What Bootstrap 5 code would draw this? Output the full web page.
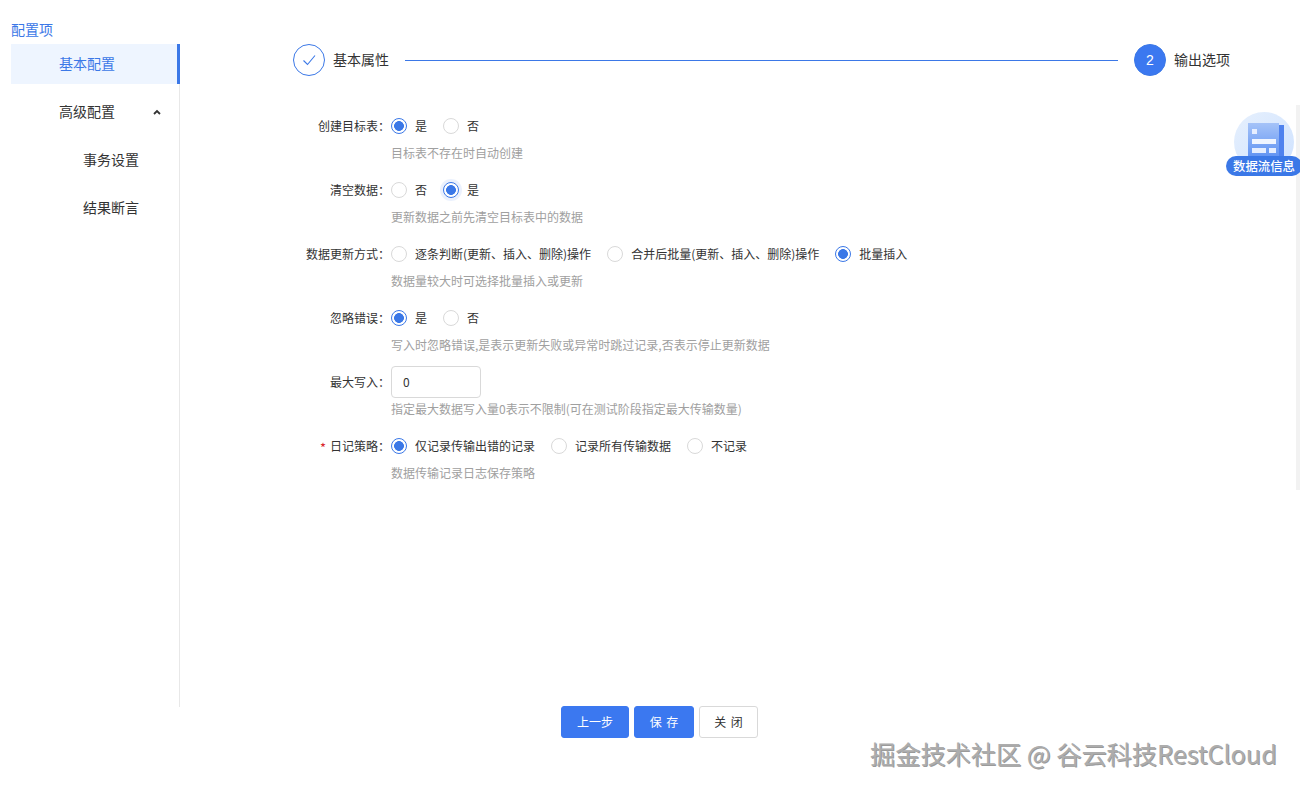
<!DOCTYPE html>
<html lang="zh">
<head>
<meta charset="utf-8">
<title>配置项</title>
<link href="https://cdn.jsdelivr.net/npm/bootstrap@5.3.0/dist/css/bootstrap.min.css" rel="stylesheet">
<style>
html,body{height:791px;overflow:hidden;}
body{font-family:"Noto Sans CJK SC",sans-serif;font-size:12px;color:#333;background:#fff;position:relative;}
.cfg-shell{height:706px;}
.cfg-side{width:169px;margin-left:11px;padding-top:22px;flex:none;}
.cfg-title{color:#3b78e7;font-size:14px;line-height:15px;height:22px;}
.cfg-menu{border-right:1px solid #e8e8e8;height:663px;font-size:14px;color:#333;}
.cfg-item{height:40px;margin-bottom:8px;line-height:38px;padding-left:48px;position:relative;}
.cfg-item.sub{padding-left:72px;}
.cfg-item.on{background:#eef5ff;color:#3b78e7;border-right:3px solid #3b78e7;margin-right:-1px;}
.cfg-caret{position:absolute;left:142px;top:17px;width:8px;height:6px;}
.cfg-main{min-width:0;}
.cfg-steps{height:32px;margin:44px 70px 0 113px;}
.cfg-dot{width:32px;height:32px;border-radius:50%;border:1px solid #3b78e7;color:#3b78e7;flex:none;font:14px "Liberation Sans",sans-serif;}
.cfg-dot.fill{background:#3b78f0;color:#fff;}
.cfg-line{height:1px;background:#3b78e7;margin:0 16px;}
.cfg-steptext{margin-left:8px;font-size:14px;line-height:30px;height:32px;color:#333;white-space:nowrap;}
.cfg-pane{margin-top:29px;height:385px;border-right:4px solid #f2f2f2;padding-top:5px;}
.cfg-row{margin-bottom:11px;}
.cfg-label{width:211px;flex:none;text-align:right;line-height:32px;padding-right:1px;font-size:12px;}
.cfg-req{color:#d9262c;margin-right:4px;font-size:13px;vertical-align:-2px;line-height:1;}
.cfg-ctl{height:32px;gap:16px;}
.cfg-hint{color:#a0a0a0;line-height:21px;height:21px;}
.cfg-check{margin:0;padding:0;min-height:0;gap:8px;}
.cfg-check .form-check-input{width:16px;height:16px;margin:0;float:none;border:1px solid #d9d9d9;flex:none;}
.cfg-check .form-check-input:checked{background-color:#fff;border-color:#3b78e7;background-image:radial-gradient(circle,#3b78e7 4.6px,transparent 5.2px);}
.cfg-check .form-check-input:focus{box-shadow:none;}
.cfg-check .form-check-input.cfg-glow,.cfg-check .form-check-input.cfg-glow:focus{box-shadow:0 0 0 3px rgba(59,120,231,.1);}
.cfg-check .form-check-label{color:#333;}
.cfg-input{width:90px;height:32px;padding:0 11px 2px;font-size:12px;border-radius:4px;border-color:#d9d9d9;color:#333;}
.cfg-foot{gap:5px;padding-left:561px;}
.cfg-btn{height:32px;font-size:12px;padding:0;border-radius:3px;word-spacing:2px;}
.cfg-btn.btn-primary{background:#3b78f0;border-color:#3b78f0;}
.cfg-btn.btn-light{background:#fff;border-color:#d9d9d9;color:#333;}
.cfg-w68{width:68px;}.cfg-w60{width:60px;}.cfg-w59{width:59px;}
.cfg-float{position:absolute;left:1226px;top:112px;width:74px;height:65px;overflow:hidden;}
.cfg-disc{position:absolute;left:8px;top:0;width:60px;height:60px;}
.cfg-pill{position:absolute;left:0;top:44px;width:76px;height:20px;border-radius:10px;background:#3b78e7;color:#fff;font-weight:500;font-size:12.4px;line-height:20px;padding-left:7px;white-space:nowrap;}
.cfg-wm{position:absolute;left:870px;top:737px;font-size:25.2px;line-height:32px;color:#adadad;text-shadow:1px 1px 0 #9a9a9a,-1px -1px 0 #fff;white-space:nowrap;}
</style>
</head>
<body>
<div class="cfg-shell d-flex">
  <aside class="cfg-side">
    <div class="cfg-title">配置项</div>
    <div class="cfg-menu">
      <div class="cfg-item on">基本配置</div>
      <div class="cfg-item">高级配置
        <svg class="cfg-caret" viewBox="0 0 8 6"><path d="M1 5 L4 2 L7 5" fill="none" stroke="#333" stroke-width="1.8"/></svg>
      </div>
      <div class="cfg-item sub">事务设置</div>
      <div class="cfg-item sub">结果断言</div>
    </div>
  </aside>
  <main class="cfg-main flex-grow-1">
    <div class="cfg-steps d-flex align-items-center">
      <span class="cfg-dot d-flex align-items-center justify-content-center">
        <svg width="16" height="16" viewBox="0 0 16 16"><path d="M2.5 8.5 L6.5 12.5 L14 3.5" fill="none" stroke="#3b78e7" stroke-width="1.1"/></svg>
      </span>
      <span class="cfg-steptext">基本属性</span>
      <span class="cfg-line flex-grow-1"></span>
      <span class="cfg-dot fill d-flex align-items-center justify-content-center">2</span>
      <span class="cfg-steptext">输出选项</span>
    </div>
    <div class="cfg-pane">
      <div class="cfg-row d-flex"><div class="cfg-label">创建目标表：</div><div>
        <div class="cfg-ctl d-flex align-items-center">
          <label class="form-check cfg-check d-flex align-items-center"><input class="form-check-input" type="radio" name="a" checked><span class="form-check-label">是</span></label>
          <label class="form-check cfg-check d-flex align-items-center"><input class="form-check-input" type="radio" name="a"><span class="form-check-label">否</span></label>
        </div>
        <div class="cfg-hint">目标表不存在时自动创建</div>
      </div></div>
      <div class="cfg-row d-flex"><div class="cfg-label">清空数据：</div><div>
        <div class="cfg-ctl d-flex align-items-center">
          <label class="form-check cfg-check d-flex align-items-center"><input class="form-check-input" type="radio" name="b"><span class="form-check-label">否</span></label>
          <label class="form-check cfg-check d-flex align-items-center"><input class="form-check-input cfg-glow" type="radio" name="b" checked><span class="form-check-label">是</span></label>
        </div>
        <div class="cfg-hint">更新数据之前先清空目标表中的数据</div>
      </div></div>
      <div class="cfg-row d-flex"><div class="cfg-label">数据更新方式：</div><div>
        <div class="cfg-ctl d-flex align-items-center">
          <label class="form-check cfg-check d-flex align-items-center"><input class="form-check-input" type="radio" name="c"><span class="form-check-label">逐条判断(更新、插入、删除)操作</span></label>
          <label class="form-check cfg-check d-flex align-items-center"><input class="form-check-input" type="radio" name="c"><span class="form-check-label">合并后批量(更新、插入、删除)操作</span></label>
          <label class="form-check cfg-check d-flex align-items-center"><input class="form-check-input" type="radio" name="c" checked><span class="form-check-label">批量插入</span></label>
        </div>
        <div class="cfg-hint">数据量较大时可选择批量插入或更新</div>
      </div></div>
      <div class="cfg-row d-flex"><div class="cfg-label">忽略错误：</div><div>
        <div class="cfg-ctl d-flex align-items-center">
          <label class="form-check cfg-check d-flex align-items-center"><input class="form-check-input" type="radio" name="d" checked><span class="form-check-label">是</span></label>
          <label class="form-check cfg-check d-flex align-items-center"><input class="form-check-input" type="radio" name="d"><span class="form-check-label">否</span></label>
        </div>
        <div class="cfg-hint">写入时忽略错误,是表示更新失败或异常时跳过记录,否表示停止更新数据</div>
      </div></div>
      <div class="cfg-row d-flex"><div class="cfg-label">最大写入：</div><div>
        <input class="form-control cfg-input" type="text" value="0">
        <div class="cfg-hint">指定最大数据写入量0表示不限制(可在测试阶段指定最大传输数量)</div>
      </div></div>
      <div class="cfg-row d-flex"><div class="cfg-label"><span class="cfg-req">*</span>日记策略：</div><div>
        <div class="cfg-ctl d-flex align-items-center">
          <label class="form-check cfg-check d-flex align-items-center"><input class="form-check-input" type="radio" name="e" checked><span class="form-check-label">仅记录传输出错的记录</span></label>
          <label class="form-check cfg-check d-flex align-items-center"><input class="form-check-input" type="radio" name="e"><span class="form-check-label">记录所有传输数据</span></label>
          <label class="form-check cfg-check d-flex align-items-center"><input class="form-check-input" type="radio" name="e"><span class="form-check-label">不记录</span></label>
        </div>
        <div class="cfg-hint">数据传输记录日志保存策略</div>
      </div></div>
    </div>
  </main>
</div>
<div class="cfg-foot d-flex">
  <button type="button" class="btn btn-primary cfg-btn cfg-w68">上一步</button>
  <button type="button" class="btn btn-primary cfg-btn cfg-w60">保 存</button>
  <button type="button" class="btn btn-light cfg-btn cfg-w59">关 闭</button>
</div>
<div class="cfg-float">
  <svg class="cfg-disc" viewBox="0 0 60 60">
    <defs>
      <linearGradient id="cfgA" x1="0" y1="0" x2="1" y2="1"><stop offset="0" stop-color="#e6f0fd"/><stop offset="1" stop-color="#cfe2ff"/></linearGradient>
      <linearGradient id="cfgB" x1="0" y1="0" x2="0" y2="1"><stop offset="0" stop-color="#a5c3f8"/><stop offset="1" stop-color="#5b8ff2"/></linearGradient>
    </defs>
    <circle cx="30" cy="30" r="30" fill="url(#cfgA)"/>
    <rect x="44" y="13" width="6" height="35" fill="#4f82ee"/>
    <rect x="14" y="11" width="31" height="37" fill="url(#cfgB)"/>
    <rect x="18" y="17" width="5" height="5" fill="#e6eeff"/>
    <rect x="18" y="27" width="24" height="5" fill="#f0f5ff"/>
    <rect x="18" y="36" width="14" height="5" fill="#e6eeff"/>
    <rect x="35" y="36" width="7" height="5" fill="#e6eeff"/>
  </svg>
  <div class="cfg-pill">数据流信息</div>
</div>
<div class="cfg-wm">掘金技术社区 @ 谷云科技RestCloud</div>
</body>
</html>
